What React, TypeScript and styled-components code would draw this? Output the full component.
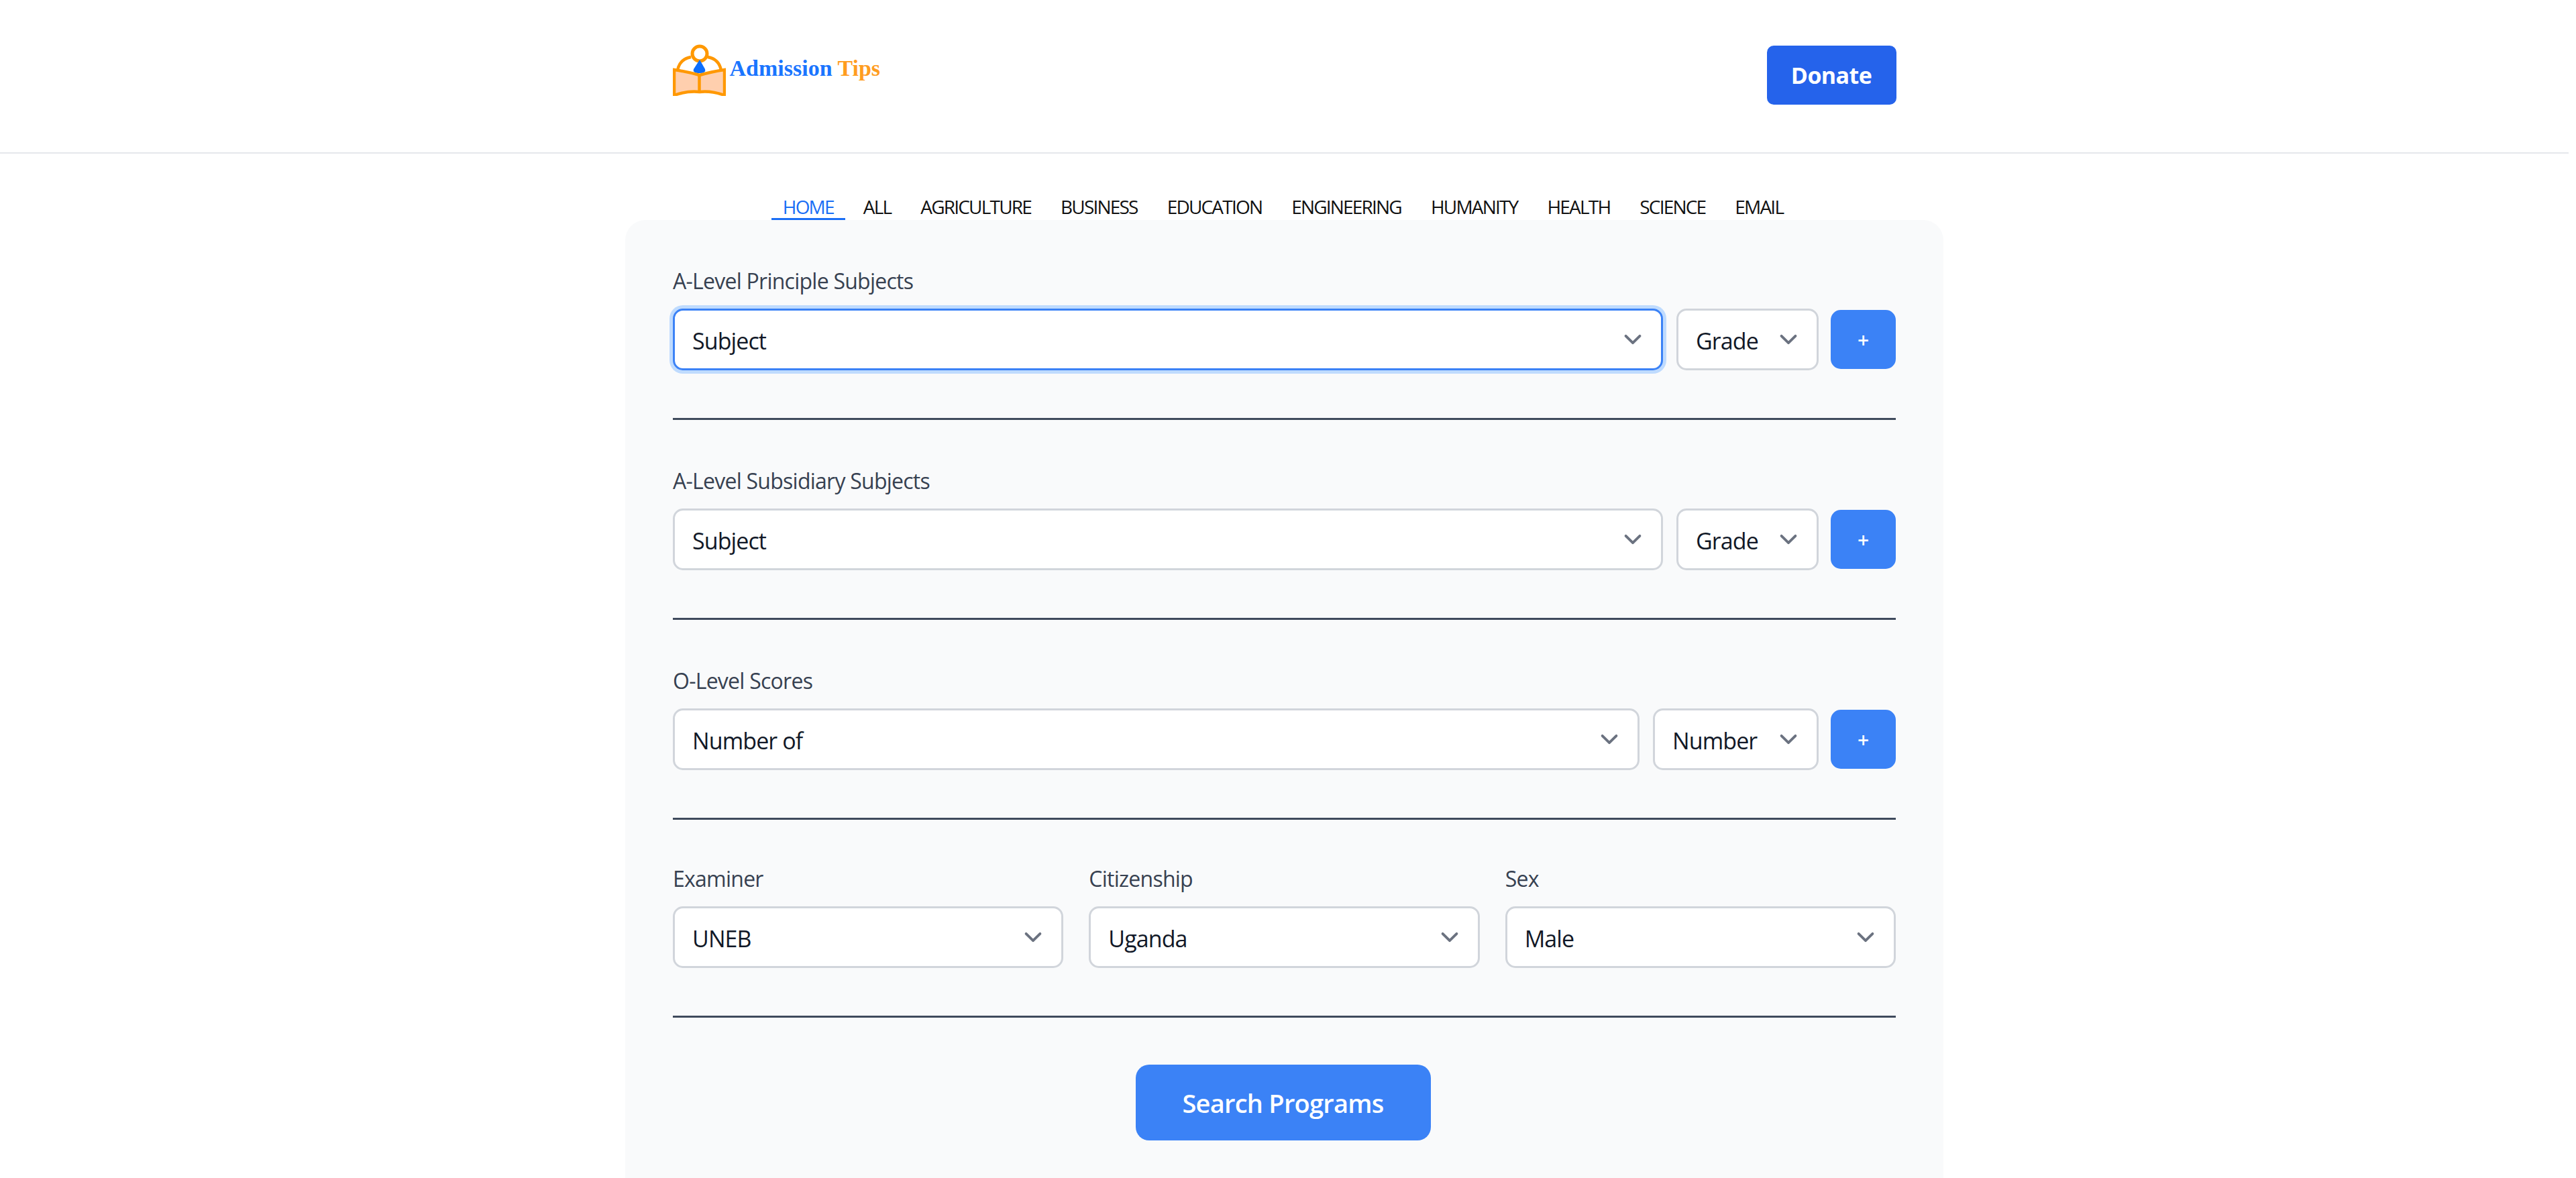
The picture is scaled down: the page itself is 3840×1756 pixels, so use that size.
import styled, { createGlobalStyle } from 'styled-components';

const navLinks = ['HOME', 'ALL', 'AGRICULTURE', 'BUSINESS', 'EDUCATION', 'ENGINEERING', 'HUMANITY', 'HEALTH', 'SCIENCE', 'EMAIL'];

const chevron =
  "url(\"data:image/svg+xml,%3csvg xmlns='http://www.w3.org/2000/svg' fill='none' viewBox='0 0 20 20'%3e%3cpath stroke='%236b7280' stroke-linecap='round' stroke-linejoin='round' stroke-width='1.5' d='M6 8l4 4 4-4'/%3e%3c/svg%3e\")";

const GlobalStyle = createGlobalStyle`
  * {
    box-sizing: border-box;
  }

  html,
  body {
    margin: 0;
    height: 1756px;
    overflow: hidden;
    background: #fff;
    font-family: 'Open Sans', 'Liberation Sans', sans-serif;
  }
`;

const Page = styled.div`
  width: 3829px;
`;

const Header = styled.header`
  height: 229px;
  border-bottom: 2px solid #e5e7eb;
`;

const HeaderInner = styled.div`
  width: 1824px;
  margin: 0 auto;
  padding-top: 65px;
  display: flex;
  justify-content: space-between;
  align-items: flex-start;
`;

const Logo = styled.a`
  display: flex;
  align-items: flex-start;
  gap: 6px;
  font-family: 'Liberation Serif', serif;
  font-size: 34px;
  font-weight: 700;
  line-height: 40px;
  color: #1a75ff;
`;

const LogoText = styled.span`
  margin-top: 17px;
`;

const LogoAccent = styled.span`
  color: #ff9d1f;
`;

const DonateButton = styled.button`
  width: 193px;
  height: 88px;
  margin-top: 3px;
  border: 0;
  border-radius: 10px;
  background: #2563eb;
  color: #fff;
  font-family: inherit;
  font-size: 34px;
  font-weight: 700;
  letter-spacing: -0.6px;
`;

const Nav = styled.nav`
  height: 99px;
  padding: 66px 4px 0 0;
  display: flex;
  justify-content: center;
  gap: 10px;
`;

const NavLink = styled.a<{ $active?: boolean }>`
  height: 33px;
  padding: 0 17px;
  font-size: 28px;
  line-height: 27px;
  letter-spacing: -1.8px;
  color: ${({ $active }) => ($active ? '#1a6ef5' : '#111')};
  border-bottom: 3px solid ${({ $active }) => ($active ? '#1a6ef5' : 'transparent')};
`;

const Card = styled.main`
  width: 1965px;
  height: 1500px;
  margin: 0 auto;
  padding: 71px 71px 0;
  background: #f9fafb;
  border-radius: 30px;
`;

const Section = styled.section`
  padding-bottom: 71px;
  margin-bottom: 71px;
  border-bottom: 3px solid #3f4a5c;
`;

const Label = styled.label`
  display: block;
  height: 40px;
  margin-bottom: 21px;
  font-size: 32px;
  line-height: 40px;
  letter-spacing: -0.75px;
  color: #374151;
`;

const FieldRow = styled.div`
  display: flex;
  align-items: center;
  gap: 18px;
`;

const Select = styled.select<{ $width?: number; $focused?: boolean }>`
  appearance: none;
  display: block;
  flex: ${({ $width }) => ($width ? `0 0 ${$width}px` : '1 1 0')};
  width: 100%;
  min-width: 0;
  height: 92px;
  padding: 4px 60px 0 26px;
  font-family: inherit;
  font-size: 34px;
  letter-spacing: -0.9px;
  color: #111827;
  background: #fff ${chevron} no-repeat right 16px center / 52px 52px;
  border: ${({ $focused }) => ($focused ? '3px solid #3b82f6' : '3px solid #d1d5db')};
  border-radius: 15px;
  box-shadow: ${({ $focused }) => ($focused ? '0 0 0 5px #bfdbfe' : 'none')};
  outline: none;
`;

const MainSelect = styled(Select)`
  margin-right: 2px;
`;

const AddButton = styled.button`
  flex: 0 0 97px;
  height: 88px;
  border: 0;
  border-radius: 15px;
  background: #3b82f6;
  color: #fff;
  font-family: inherit;
  font-size: 30px;
  font-weight: 600;
`;

const PersonGrid = styled.div`
  display: grid;
  grid-template-columns: repeat(3, 1fr);
  gap: 38px;
  margin-top: -3px;
`;

const SearchWrap = styled.div`
  display: flex;
  justify-content: center;
  margin: -1px 4px 0 0;
`;

const SearchButton = styled.button`
  width: 440px;
  height: 113px;
  border: 0;
  border-radius: 20px;
  background: #3b82f6;
  color: #fff;
  font-family: inherit;
  font-size: 38px;
  font-weight: 600;
  letter-spacing: -0.75px;
`;

const LogoMark = () => (
  <svg width="79" height="78" viewBox="0 0 79 78" fill="none" aria-hidden="true">
    <circle cx="40" cy="15" r="11" fill="#fff" stroke="#ff9800" strokeWidth="5" />
    <path d="M7 40C9 29 16 22 27 20M52 20C63 22 70 29 72 40" stroke="#ff9800" strokeWidth="4.5" />
    <path d="M40 24L48 38Q50 44 40 44Q29 44 31 38Z" fill="#0d6efd" />
    <path d="M2 39Q22 42 40 47Q57 42 77 39V77Q57 70 40 72Q22 70 2 77Z" fill="#ffcfae" stroke="#ff9800" strokeWidth="4.5" />
    <path d="M39.5 47V72" stroke="#ff9800" strokeWidth="4.5" />
  </svg>
);

export default function App() {
  return (
    <Page>
      <GlobalStyle />
      <Header>
        <HeaderInner>
          <Logo>
            <LogoMark />
            <LogoText>
              Admission <LogoAccent>Tips</LogoAccent>
            </LogoText>
          </Logo>
          <DonateButton>Donate</DonateButton>
        </HeaderInner>
      </Header>

      <Nav>
        {navLinks.map((link) => (
          <NavLink key={link} $active={link === 'HOME'}>
            {link}
          </NavLink>
        ))}
      </Nav>

      <Card>
        <Section>
          <Label>A-Level Principle Subjects</Label>
          <FieldRow>
            <MainSelect $focused>
              <option>Subject</option>
            </MainSelect>
            <Select $width={212}>
              <option>Grade</option>
            </Select>
            <AddButton>+</AddButton>
          </FieldRow>
        </Section>

        <Section>
          <Label>A-Level Subsidiary Subjects</Label>
          <FieldRow>
            <MainSelect>
              <option>Subject</option>
            </MainSelect>
            <Select $width={212}>
              <option>Grade</option>
            </Select>
            <AddButton>+</AddButton>
          </FieldRow>
        </Section>

        <Section>
          <Label>O-Level Scores</Label>
          <FieldRow>
            <MainSelect>
              <option>Number of</option>
            </MainSelect>
            <Select $width={247}>
              <option>Number</option>
            </Select>
            <AddButton>+</AddButton>
          </FieldRow>
        </Section>

        <Section>
          <PersonGrid>
            <div>
              <Label>Examiner</Label>
              <Select>
                <option>UNEB</option>
              </Select>
            </div>
            <div>
              <Label>Citizenship</Label>
              <Select>
                <option>Uganda</option>
              </Select>
            </div>
            <div>
              <Label>Sex</Label>
              <Select>
                <option>Male</option>
              </Select>
            </div>
          </PersonGrid>
        </Section>

        <SearchWrap>
          <SearchButton>Search Programs</SearchButton>
        </SearchWrap>
      </Card>
    </Page>
  );
}
